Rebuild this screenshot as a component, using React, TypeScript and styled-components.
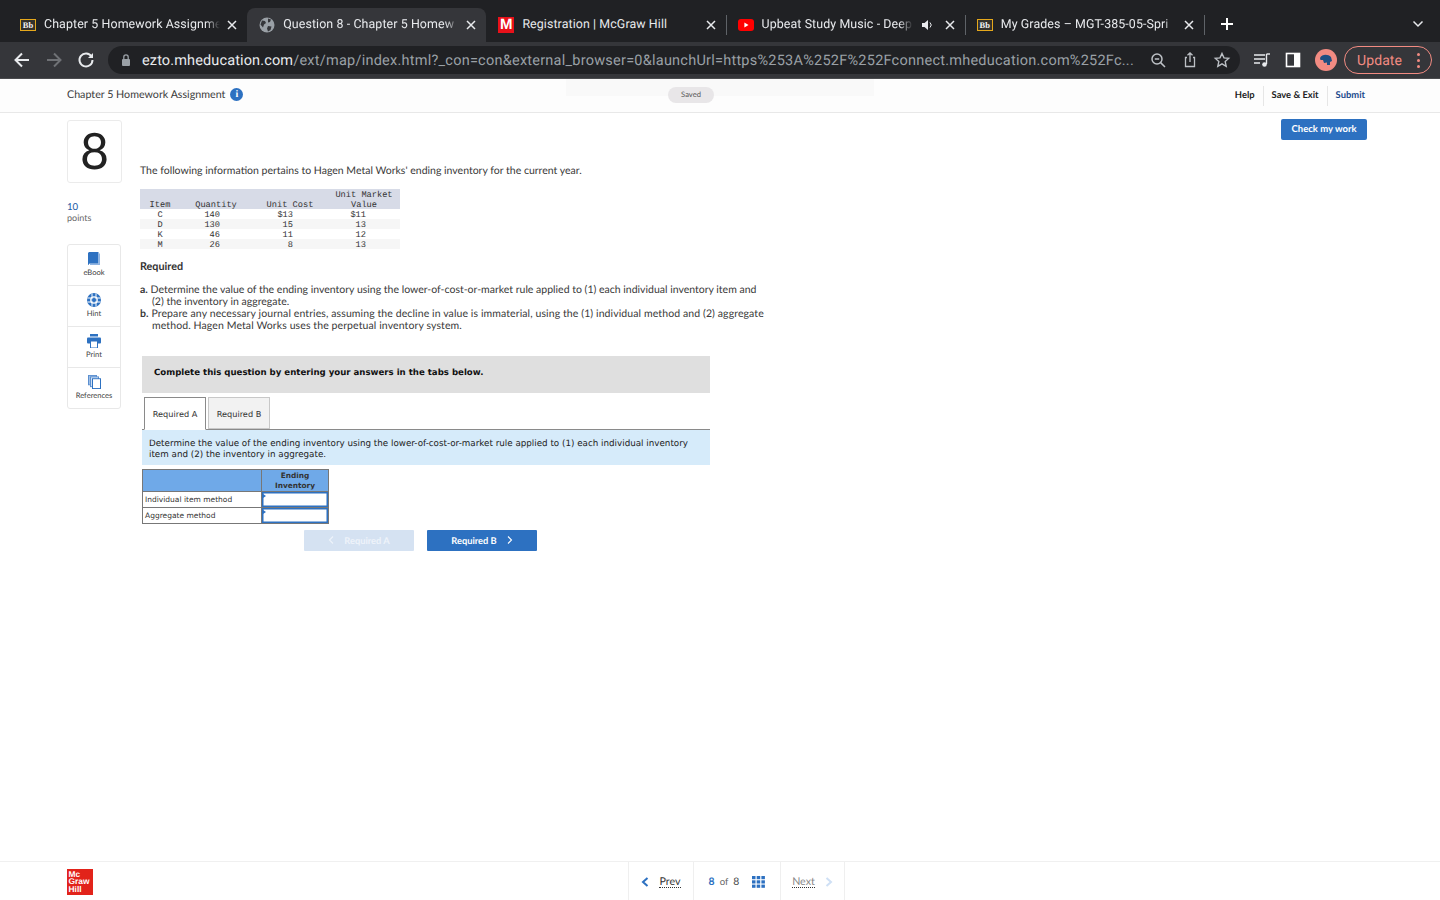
import React from "react";
import styled, { createGlobalStyle } from "styled-components";

const Global = createGlobalStyle`
  html, body { margin: 0; padding: 0; background: #fff; }
  body { font-family: "Lato", "Liberation Sans", sans-serif; color: #333; overflow: hidden; text-rendering: geometricPrecision; }
  * { box-sizing: border-box; }
`;

const Page = styled.div`
  width: 1440px; height: 900px; display: flex; flex-direction: column; overflow: hidden; position: relative;
`;
const TabStrip = styled.div`
  height: 42px; background: #202124; padding: 8px 0 0 8px; display: flex; align-items: stretch;
`;
const Tab = styled.div<{ $active?: boolean }>`
  width: 239.2px; flex: none; display: flex; align-items: center; padding: 0 7px 1px 12px; gap: 8px;
  border-radius: 8px 8px 0 0; position: relative;
  background: ${(p) => (p.$active ? "#35363a" : "transparent")};
  font: 12.4px "Roboto", "Liberation Sans", sans-serif; color: #e8eaed; letter-spacing: 0.1px;
`;
const TabSep = styled.div`
  width: 1px; height: 20px; background: #5f6368; align-self: center; margin: 0 -1px 0 0; flex: none;
`;
const Title = styled.span<{ $fade?: boolean }>`
  flex: 1; min-width: 0; white-space: nowrap;
  ${(p) => p.$fade && "mask-image: linear-gradient(to right, #000 calc(100% - 14px), transparent);"}
`;
const Favicon = styled.span`
  width: 16px; height: 16px; flex: none; display: flex; align-items: center; justify-content: center;
`;
const BbIcon = styled.span`
  width: 16px; height: 12px; border: 1px solid #e5a81c; background: #33312c; color: #f4f4f4;
  font: bold 8.5px/10px "Liberation Serif", serif; text-align: center; display: block; letter-spacing: 0;
`;
const McIcon = styled.span`
  width: 16px; height: 16px; background: #e8111a; color: #fff; font: bold 15px/16px "Liberation Sans", sans-serif;
  text-align: center; display: block;
`;
const Close = styled.svg`
  width: 16px; height: 16px; flex: none; margin-left: -4px;
`;
const Speaker = styled.svg`
  width: 14px; height: 14px; flex: none; margin-right: 3px;
`;
const CloseIcon = () => (
  <Close viewBox="0 0 16 16"><path d="M4 4l8 8M12 4l-8 8" stroke="#e8eaed" strokeWidth="1.5" fill="none" /></Close>
);
const StripEnd = styled.div`
  flex: 1; display: flex; align-items: center; justify-content: space-between; padding: 0 15px 2px 16px;
`;
const Toolbar = styled.div`
  height: 36px; background: #35363a; display: flex; align-items: center; padding: 0 8px 0 12px;
`;
const NavBtn = styled.svg`
  width: 20px; height: 20px; flex: none; margin-right: 12px;
`;
const Omni = styled.div`
  width: 1132px; height: 28px; border-radius: 14px; background: #202124; display: flex; align-items: center;
  padding: 0 8px 0 12px; flex: none;
`;
const Url = styled.div`
  flex: 1; margin-left: 10px; font: 14.5px "Roboto", "Liberation Sans", sans-serif; letter-spacing: 0.24px; color: #9aa0a6; white-space: nowrap;
  b { font-weight: 400; color: #e8eaed; letter-spacing: 0.13px; }
`;
const OmniIcons = styled.div`
  display: flex; gap: 12px; align-items: center;
`;
const ToolIcon = styled.svg<{ $gap?: number }>`
  width: 20px; height: 20px; flex: none; margin-left: ${(p) => p.$gap ?? 0}px;
`;
const ToolRight = styled.div`
  display: flex; align-items: center; margin-left: 12px;
`;
const Avatar = styled.div`
  width: 22px; height: 22px; border-radius: 50%; background: #f28b82; margin-left: 12px; display: flex; align-items: center; justify-content: center;
`;
const Update = styled.div`
  width: 88px; height: 28px; border: 1px solid #f28b82; border-radius: 14px; color: #f28b82; margin-left: 7px;
  font: 14px "Roboto", "Liberation Sans", sans-serif; letter-spacing: 0.1px; display: flex; align-items: center; justify-content: space-between; padding: 1px 11px 0 12px;
`;
const Dots = styled.span`
  display: flex; flex-direction: column; gap: 3px;
  i { width: 3px; height: 3px; background: #f28b82; border-radius: 50%; display: block; }
`;
const TopLine = styled.div`
  height: 1px; background: #4a4b4e; flex: none;
`;
const Header = styled.div`
  height: 34px; background: #fdfdfd; border-bottom: 1px solid #e8e8e8; display: flex; align-items: center; padding: 0 75px 2px 67px; position: relative;
`;
const Assignment = styled.div`
  display: flex; align-items: center; gap: 5px; color: #3b3b3b; width: 601px; flex: none; font-size: 10.7px;
`;
const InfoDot = styled.span`
  width: 13px; height: 13px; border-radius: 50%; background: #2d71c1; color: #fff; display: flex; align-items: center; justify-content: center;
  font: bold 10px "Liberation Serif", serif;
`;
const Saved = styled.div`
  width: 46px; height: 16px; border-radius: 8px; background: #e8e6e8; color: #555; font-size: 7.6px; display: flex; align-items: center; justify-content: center;
  position: relative; z-index: 1; padding-bottom: 1px;
`;
const Ghost = styled.div`
  position: absolute; left: 566px; top: 0; width: 308px; height: 17px; background: #f9f9f9;
`;
const HeaderLinks = styled.div`
  margin-left: auto; display: flex; align-items: center; font-size: 9.4px; font-weight: 700; color: #222; padding-top: 2px;
`;
const HeadLink = styled.span<{ $blue?: boolean; $sep?: boolean }>`
  padding: 0 8px; height: 20px; display: flex; align-items: center;
  ${(p) => p.$sep && "border-left: 1px solid #e6e6e6;"}
  color: ${(p) => (p.$blue ? "#1c4a8c" : "#222")};
  &:last-child { padding-right: 0; }
`;
const Main = styled.div`
  flex: 1; display: flex; padding: 7px 73px 0 67px; min-height: 0;
`;
const Left = styled.div`
  width: 73px; flex: none; display: flex; flex-direction: column;
`;
const NumberBox = styled.div`
  width: 55px; height: 63px; border: 1px solid #ebebeb; border-radius: 3px; font-size: 50px; line-height: 58px; color: #222; text-align: center;
`;
const Points = styled.div`
  margin-top: 20px; font-size: 9px; line-height: 12px; color: #666;
  b { display: block; font-weight: 400; color: #1c5aa5; font-size: 9.6px; line-height: 9px; }
`;
const Tools = styled.div`
  margin-top: 20px; width: 54px; border: 1px solid #e8e8e8; border-radius: 3px;
`;
const ToolCard = styled.div`
  height: 41px; display: flex; flex-direction: column; align-items: center; padding-top: 7px; font-size: 7.6px; line-height: 10px; color: #444; gap: 1px;
  &:first-child { height: 40px; }
  & + & { border-top: 1px solid #e8e8e8; }
`;
const Center = styled.div`
  flex: 1; padding-top: 45px; font-size: 10.5px; color: #3a3a3a; min-width: 0;
`;
const Intro = styled.p`
  margin: 0; line-height: 13px; height: 13px;
`;
const DataTable = styled.table`
  margin-top: 11px; width: 260px; border-collapse: collapse; table-layout: fixed;
  font: 8.67px/8px "Liberation Mono", monospace; color: #333;
`;
const Th = styled.th<{ $w: number }>`
  width: ${(p) => p.$w}px; background: #d7dbe7; font-weight: 400; text-align: center; vertical-align: bottom; padding: 0; line-height: 10px;
`;
const ThText = styled.span`
  display: block; margin: 1px 0 -1px;
`;
const Tr = styled.tr<{ $alt?: boolean }>`
  background: ${(p) => (p.$alt ? "#f6f6f6" : "#fff")};
`;
const TdC = styled.td`
  text-align: center; padding: 2px 0 0; height: 10px;
`;
const TdR = styled.td<{ $pr: number }>`
  text-align: right; padding: 2px ${(p) => p.$pr}px 0 0; height: 10px;
`;
const Heading = styled.div`
  margin-top: 11px; font-weight: 700; font-size: 10.8px; line-height: 13px; color: #333;
`;
const Req = styled.div`
  margin-top: 11px; width: 625px; line-height: 12px;
`;
const ReqItem = styled.div<{ $spread?: boolean }>`
  padding-left: 12px; text-indent: -12px; letter-spacing: ${(p) => (p.$spread ? "0.1px" : "0")};
  b { font-weight: 700; }
`;
const Sheet = styled.div`
  margin-left: 2px; width: 568px; font-family: "DejaVu Sans", "Liberation Sans", sans-serif;
`;
const Notice = styled.div`
  margin-top: 24px; height: 37px; background: #dfdfdf; padding: 11px 12px 0; font-size: 8.6px; line-height: 12px; font-weight: 700; color: #111;
`;
const TabRow = styled.div`
  margin-top: 4px; height: 33px; display: flex; gap: 2px; padding-left: 2px; border-bottom: 1px solid #8a8a8a; font-size: 8.2px; color: #333;
`;
const SubTab = styled.div<{ $active?: boolean }>`
  width: 62px; height: ${(p) => (p.$active ? "33px" : "32px")}; display: flex; align-items: center; justify-content: center;
  padding-top: ${(p) => (p.$active ? "1px" : "2px")};
  border: 1px solid ${(p) => (p.$active ? "#8a8a8a" : "#c8c8c8")}; ${(p) => p.$active && "border-bottom: 1px solid #fff;"}
  background: ${(p) => (p.$active ? "#fff" : "#f2f2f2")};
`;
const Directions = styled.div`
  height: 35px; background: #d6ebfa; padding: 9px 7px 0; font-size: 8.75px; line-height: 11px; color: #222;
`;
const Answer = styled.table`
  margin-top: 4px; border-collapse: collapse; table-layout: fixed; width: 186px; border: 1px solid #777;
  font-size: 7.5px; color: #333;
`;
const AHead = styled.th<{ $w: number }>`
  width: ${(p) => p.$w}px; height: 22px; background: #6fa9e8; border: 1px solid #777; font-size: 7.4px; line-height: 10px; font-weight: 700; padding: 1px 0 0; color: #333;
`;
const ARowLabel = styled.td`
  height: 16px; border: 1px solid #777; padding: 0 2px; white-space: nowrap;
`;
const AInput = styled.td`
  border: 1px solid #777; padding: 0; position: relative; box-shadow: inset 0 0 0 1.5px #2d71c1;
  &::before { content: ""; position: absolute; left: 1px; top: 2px; border-style: solid; border-width: 2px 0 2px 3px; border-color: transparent transparent transparent #2d71c1; }
`;
const Pager = styled.div`
  margin: 6px 0 0 162px; display: flex; gap: 13px;
`;
const PageBtn = styled.div<{ $off?: boolean }>`
  width: 110px; height: 21px; border-radius: 1px; background: ${(p) => (p.$off ? "#d5e2f2" : "#2d71c1")}; color: ${(p) => (p.$off ? "#eef3fa" : "#fff")};
  font: 700 9.3px "Lato", sans-serif; display: flex; align-items: center; justify-content: center; gap: 10px; padding-bottom: 1px;
`;
const Check = styled.div`
  width: 86px; height: 21px; background: #2d71c1; color: #fff; border-radius: 2px; font-weight: 700; font-size: 9.5px; display: flex; align-items: center; justify-content: center; flex: none;
  margin-top: -1px;
`;
const Footer = styled.div`
  height: 39px; border-top: 1px solid #f0f0f0; display: flex; align-items: center; padding: 0 0 0 67px; flex: none;
`;
const Logo = styled.div`
  width: 26px; height: 26px; background: #e2231a; color: #fff; font: bold 8.4px/7.8px "Liberation Sans", sans-serif; padding: 1.5px 1.5px; margin-top: 2px; flex: none;
`;
const FootNav = styled.div`
  margin-left: 535px; display: flex; height: 38px; border-right: 1px solid #efefef; font-size: 10.7px; color: #444;
`;
const NavCell = styled.div<{ $w: number }>`
  width: ${(p) => p.$w}px; border-left: 1px solid #efefef; display: flex; align-items: center; justify-content: center; gap: 10px; padding-top: 1px;
`;
const Dotted = styled.span<{ $muted?: boolean }>`
  border-bottom: 1px dotted #333; line-height: 10px; margin-top: 1px; color: ${(p) => (p.$muted ? "#888" : "#333")};
`;
const Of = styled.span`
  display: flex; gap: 5px; align-items: baseline; font-size: 10.4px; margin-right: 3px;
  b { color: #2d71c1; font-weight: 700; }
  small { font-size: 9.6px; color: #666; }
`;

const Globe = () => (
  <svg width="16" height="16" viewBox="0 0 16 16"><circle cx="8" cy="8" r="7.5" fill="#9aa0a6" /><path d="M3 3.5l3 .5 1 2-2 1.5-1 3-2.5-3zM9 1.5l3 1-1 2.5-2 .5zM9 9l3.5 .5-1 3.5-2.5 1.5-1-3z" fill="#35363a" /></svg>
);
const Yt = () => (
  <svg width="16" height="12" viewBox="0 0 16 12"><rect width="16" height="12" rx="3" fill="#f00" /><path d="M6.4 3.5v5L10.5 6z" fill="#fff" /></svg>
);

const BookI = () => (
  <svg width="13" height="14" viewBox="0 0 13 15" preserveAspectRatio="none"><path d="M1 0H10.500V12.500H1z" fill="#2d71c1" /><path d="M10.500 1.500H12V14H2v-1.500H10.500z" fill="#8fb4e2" /><path d="M0 1v12.500l1 .5V0z" fill="#2d71c1" /></svg>
);
const HintI = () => (
  <svg width="14" height="14" viewBox="0 0 14 14"><circle cx="7" cy="7" r="7" fill="#2d71c1" /><circle cx="7" cy="7" r="3.300" fill="none" stroke="#fff" strokeWidth="1.100" /><path d="M5 .5v13M9 .5v13M.5 5h13M.5 9h13" stroke="#fff" strokeWidth="1" /><circle cx="7" cy="7" r="2" fill="#2d71c1" /></svg>
);
const PrintI = () => (
  <svg width="14" height="14" viewBox="0 0 14 14"><rect x="3" y="0" width="8" height="2.5" fill="#2d71c1" /><rect x="0" y="3.5" width="14" height="6" rx="1" fill="#2d71c1" /><rect x="3.5" y="7" width="7" height="7" fill="#fff" stroke="#2d71c1" /></svg>
);
const RefI = () => (
  <svg width="13" height="14" viewBox="0 0 13 15" preserveAspectRatio="none"><rect x=".5" y=".5" width="8" height="10" fill="#9fbfe6" stroke="#5b8fd0" /><rect x="2.5" y="2" width="8" height="10.5" fill="#cfe0f5" stroke="#5b8fd0" /><rect x="4.5" y="4" width="8" height="10.5" fill="#fff" stroke="#2d71c1" /></svg>
);
const Chev = ({ dir, color }: { dir: "l" | "r"; color: string }) => (
  <svg width="6" height="8" viewBox="0 0 6 8"><path d={dir === "l" ? "M5 .5L1.500 4 5 7.500" : "M1 .5L4.500 4 1 7.500"} stroke={color} strokeWidth="1.100" fill="none" /></svg>
);

export default function App() {
  return (
    <Page>
      <Global />
      <TabStrip>
        <Tab><Favicon><BbIcon>Bb</BbIcon></Favicon><Title $fade>Chapter 5 Homework Assignme</Title><CloseIcon /></Tab>
        <Tab $active><Favicon><Globe /></Favicon><Title $fade>Question 8 - Chapter 5 Homew</Title><CloseIcon /></Tab>
        <Tab><Favicon><McIcon>M</McIcon></Favicon><Title>Registration | McGraw Hill</Title><CloseIcon /></Tab>
        <TabSep />
        <Tab>
          <Favicon><Yt /></Favicon>
          <Title $fade>Upbeat Study Music - Deep</Title>
          <Speaker viewBox="0 0 14 14"><path d="M1 5h2.500L7 2v10L3.500 9H1z" fill="#e8eaed" /><path d="M9 4.500a3.500 3.500 0 0 1 0 5" stroke="#e8eaed" fill="none" /></Speaker>
          <CloseIcon />
        </Tab>
        <TabSep />
        <Tab><Favicon><BbIcon>Bb</BbIcon></Favicon><Title $fade>My Grades – MGT-385-05-Spri</Title><CloseIcon /></Tab>
        <TabSep />
        <StripEnd>
          <svg width="14" height="14" viewBox="0 0 14 14"><path d="M7 1v12M1 7h12" stroke="#fff" strokeWidth="2" /></svg>
          <svg width="14" height="14" viewBox="0 0 14 14"><path d="M2.500 4.500L7 9l4.500-4.500" stroke="#e8eaed" strokeWidth="1.500" fill="none" /></svg>
        </StripEnd>
      </TabStrip>
      <Toolbar>
        <NavBtn viewBox="0 0 20 20"><path d="M17 10H4M10 3.500L3.500 10l6.500 6.500" stroke="#e8eaed" strokeWidth="2" fill="none" /></NavBtn>
        <NavBtn viewBox="0 0 20 20"><path d="M3 10h13M10 3.500l6.500 6.500-6.500 6.500" stroke="#6f7175" strokeWidth="2" fill="none" /></NavBtn>
        <NavBtn viewBox="0 0 20 20"><path d="M15.500 6.500A6.500 6.500 0 1 0 16.500 10" stroke="#e8eaed" strokeWidth="2" fill="none" /><path d="M17 3v5h-5z" fill="#e8eaed" /></NavBtn>
        <Omni>
          <svg width="12" height="14" viewBox="0 0 12 14"><rect x="2" y="6" width="8" height="7" rx="1" fill="#9aa0a6" /><path d="M3.800 6V4a2.200 2.200 0 0 1 4.400 0v2" stroke="#9aa0a6" strokeWidth="1.300" fill="none" /></svg>
          <Url><b>ezto.mheducation.com</b>/ext/map/index.html?_con=con&amp;external_browser=0&amp;launchUrl=https%253A%252F%252Fconnect.mheducation.com%252Fc...</Url>
          <OmniIcons>
            <ToolIcon viewBox="0 0 20 20"><circle cx="9" cy="9" r="5" stroke="#bdc1c6" strokeWidth="1.500" fill="none" /><path d="M6.800 9h4.400M12.600 12.600L17 17" stroke="#bdc1c6" strokeWidth="1.500" /></ToolIcon>
            <ToolIcon viewBox="0 0 20 20"><path d="M7 7.500H5.500v9h9v-9H13M10 12V3M7.500 5.200L10 2.800l2.500 2.400" stroke="#bdc1c6" strokeWidth="1.300" fill="none" /></ToolIcon>
            <ToolIcon viewBox="0 0 20 20"><path d="M10 3.500l2 4.400 4.700.5-3.500 3.200 1 4.700L10 13.900l-4.200 2.400 1-4.700-3.500-3.200 4.700-.5z" stroke="#bdc1c6" strokeWidth="1.400" fill="none" /></ToolIcon>
          </OmniIcons>
        </Omni>
        <ToolRight>
          <ToolIcon viewBox="0 0 20 20"><path d="M2 5h11M2 9h11M2 13h6" stroke="#e8eaed" strokeWidth="1.400" /><path d="M14.500 4v10" stroke="#e8eaed" strokeWidth="1.400" /><path d="M14.500 4H18" stroke="#e8eaed" strokeWidth="1.400" /><circle cx="12.500" cy="14.500" r="2.300" fill="#e8eaed" /></ToolIcon>
          <ToolIcon $gap={11} viewBox="0 0 20 20"><rect x="3.500" y="3.500" width="13" height="13" fill="none" stroke="#fff" strokeWidth="1.600" /><rect x="11" y="3.500" width="5.500" height="13" fill="#fff" /></ToolIcon>
          <Avatar><svg width="14" height="12" viewBox="0 0 14 12"><path d="M1 4c2-4 8-4 11-1l1 4-2 1v3H8V8.500L5 9 4 6 1.500 6z" fill="#1f4f82" /></svg></Avatar>
          <Update>Update<Dots><i /><i /><i /></Dots></Update>
        </ToolRight>
      </Toolbar>
      <TopLine />
      <Header>
        <Ghost />
        <Assignment>Chapter 5 Homework Assignment <InfoDot>i</InfoDot></Assignment>
        <Saved>Saved</Saved>
        <HeaderLinks>
          <HeadLink>Help</HeadLink>
          <HeadLink $sep>Save &amp; Exit</HeadLink>
          <HeadLink $sep $blue>Submit</HeadLink>
        </HeaderLinks>
      </Header>
      <Main>
        <Left>
          <NumberBox>8</NumberBox>
          <Points><b>10</b>points</Points>
          <Tools>
            <ToolCard><BookI />eBook</ToolCard>
            <ToolCard><HintI />Hint</ToolCard>
            <ToolCard><PrintI />Print</ToolCard>
            <ToolCard><RefI />References</ToolCard>
          </Tools>
        </Left>
        <Center>
          <Intro>The following information pertains to Hagen Metal Works' ending inventory for the current year.</Intro>
          <DataTable>
            <thead>
              <tr>
                <Th $w={40}><ThText>Item</ThText></Th>
                <Th $w={72}><ThText>Quantity</ThText></Th>
                <Th $w={76}><ThText>Unit Cost</ThText></Th>
                <Th $w={72}><ThText>Unit Market<br />Value</ThText></Th>
              </tr>
            </thead>
            <tbody>
              <Tr><TdC>C</TdC><TdR $pr={32}>140</TdR><TdR $pr={35}>$13</TdR><TdR $pr={34}>$11</TdR></Tr>
              <Tr $alt><TdC>D</TdC><TdR $pr={32}>130</TdR><TdR $pr={35}>15</TdR><TdR $pr={34}>13</TdR></Tr>
              <Tr><TdC>K</TdC><TdR $pr={32}>46</TdR><TdR $pr={35}>11</TdR><TdR $pr={34}>12</TdR></Tr>
              <Tr $alt><TdC>M</TdC><TdR $pr={32}>26</TdR><TdR $pr={35}>8</TdR><TdR $pr={34}>13</TdR></Tr>
            </tbody>
          </DataTable>
          <Heading>Required</Heading>
          <Req>
            <ReqItem><b>a.</b> Determine the value of the ending inventory using the lower-of-cost-or-market rule applied to (1) each individual inventory item and (2) the inventory in aggregate.</ReqItem>
            <ReqItem $spread><b>b.</b> Prepare any necessary journal entries, assuming the decline in value is immaterial, using the (1) individual method and (2) aggregate method. Hagen Metal Works uses the perpetual inventory system.</ReqItem>
          </Req>
          <Sheet>
            <Notice>Complete this question by entering your answers in the tabs below.</Notice>
            <TabRow>
              <SubTab $active>Required A</SubTab>
              <SubTab>Required B</SubTab>
            </TabRow>
            <Directions>Determine the value of the ending inventory using the lower-of-cost-or-market rule applied to (1) each individual inventory item and (2) the inventory in aggregate.</Directions>
            <Answer>
              <thead>
                <tr><AHead $w={119} /><AHead $w={67}>Ending<br />Inventory</AHead></tr>
              </thead>
              <tbody>
                <tr><ARowLabel>Individual item method</ARowLabel><AInput /></tr>
                <tr><ARowLabel>Aggregate method</ARowLabel><AInput /></tr>
              </tbody>
            </Answer>
            <Pager>
              <PageBtn $off><Chev dir="l" color="#eef3fa" />Required A</PageBtn>
              <PageBtn>Required B<Chev dir="r" color="#fff" /></PageBtn>
            </Pager>
          </Sheet>
        </Center>
        <Check>Check my work</Check>
      </Main>
      <Footer>
        <Logo>Mc<br />Graw<br />Hill</Logo>
        <FootNav>
          <NavCell $w={65}>
            <svg width="8" height="10" viewBox="0 0 8 10"><path d="M6.500 1L2 5l4.500 4" stroke="#2d71c1" strokeWidth="2" fill="none" /></svg>
            <Dotted>Prev</Dotted>
          </NavCell>
          <NavCell $w={87}>
            <Of><b>8</b><small>of</small><span>8</span></Of>
            <svg width="13" height="12" viewBox="0 0 13 12" fill="#2d71c1"><rect width="3.500" height="3.200" /><rect x="4.700" width="3.500" height="3.200" /><rect x="9.400" width="3.500" height="3.200" /><rect y="4.300" width="3.500" height="3.200" /><rect x="4.700" y="4.300" width="3.500" height="3.200" /><rect x="9.400" y="4.300" width="3.500" height="3.200" /><rect y="8.600" width="3.500" height="3.200" /><rect x="4.700" y="8.600" width="3.500" height="3.200" /><rect x="9.400" y="8.600" width="3.500" height="3.200" /></svg>
          </NavCell>
          <NavCell $w={64}>
            <Dotted $muted>Next</Dotted>
            <svg width="8" height="10" viewBox="0 0 8 10"><path d="M1.500 1L6 5 1.500 9" stroke="#cfe0f5" strokeWidth="2" fill="none" /></svg>
          </NavCell>
        </FootNav>
      </Footer>
    </Page>
  );
}
